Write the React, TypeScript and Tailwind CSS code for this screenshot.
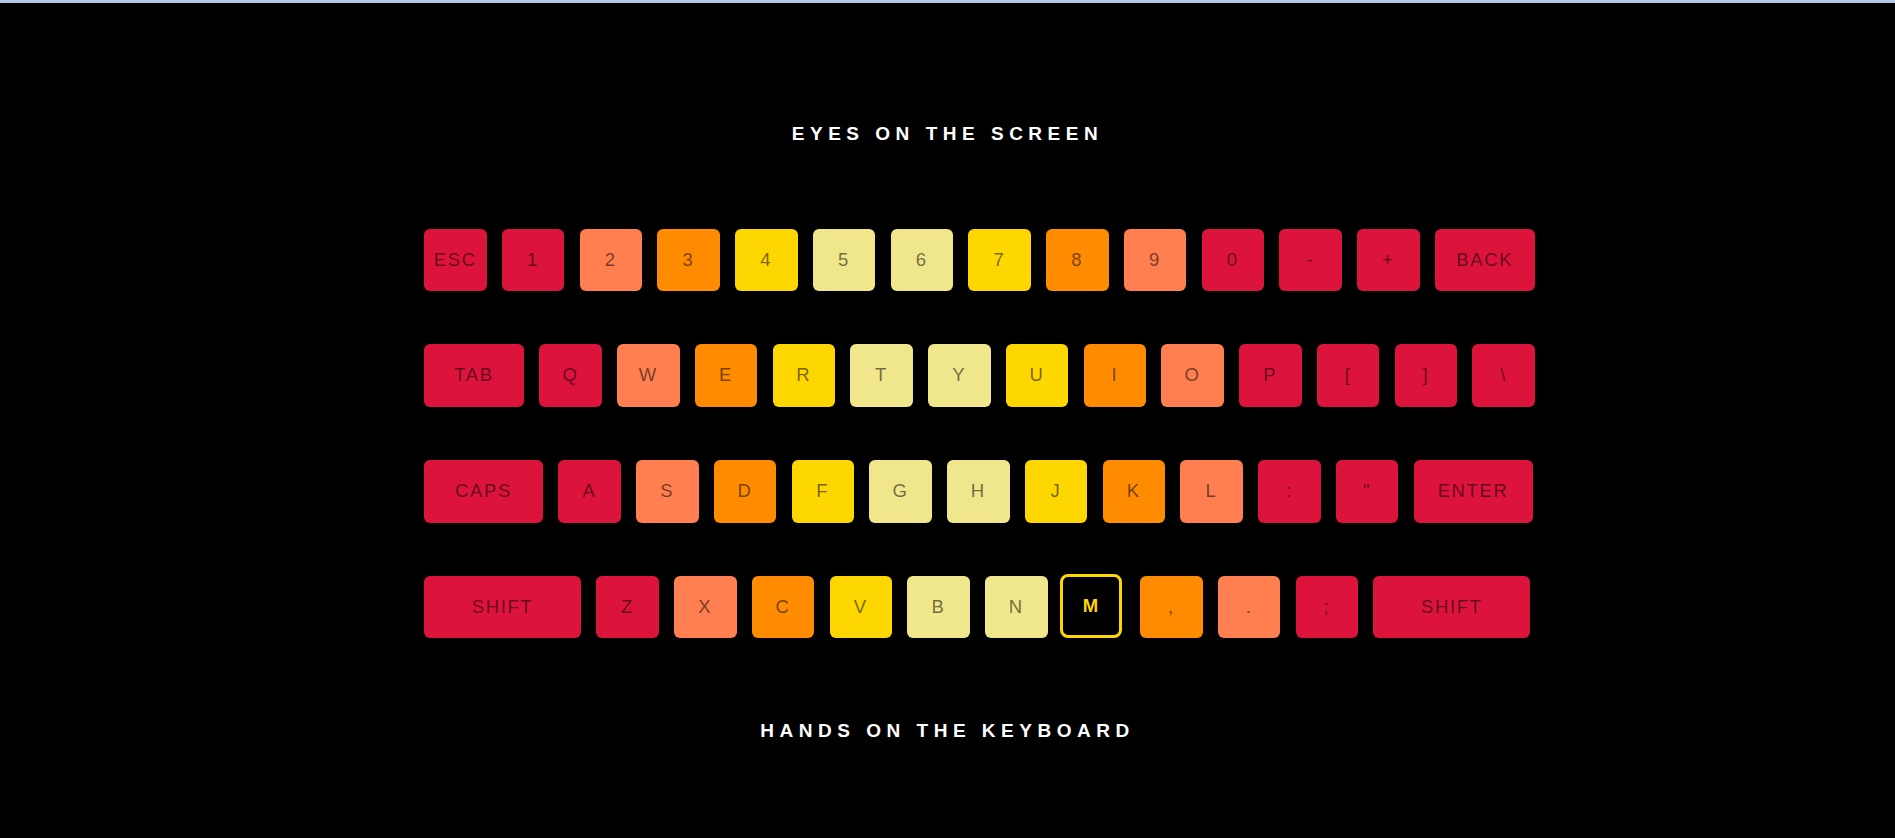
import React from 'react';
import clsx from 'clsx';

type Tone = 'crimson' | 'coral' | 'orange' | 'gold' | 'khaki' | 'active';

interface KeyDef {
  label: string;
  tone: Tone;
  width?: string;
}

const toneClass: Record<Tone, string> = {
  crimson: 'bg-[#dc143c] text-black/55',
  coral: 'bg-[#ff7f50] text-black/55',
  orange: 'bg-[#ff8c00] text-black/55',
  gold: 'bg-[#ffd700] text-black/55',
  khaki: 'bg-[#f0e68c] text-black/55',
  active:
    'bg-black border-[3px] border-[#ffd700] text-[#ffd700] font-bold rounded-[8px] ml-[-2.5px] mr-[2.5px] h-[64px] mt-[-1.5px] w-[62px]',
};

const rows: KeyDef[][] = [
  [
    { label: 'ESC', tone: 'crimson' },
    { label: '1', tone: 'crimson' },
    { label: '2', tone: 'coral' },
    { label: '3', tone: 'orange' },
    { label: '4', tone: 'gold' },
    { label: '5', tone: 'khaki' },
    { label: '6', tone: 'khaki' },
    { label: '7', tone: 'gold' },
    { label: '8', tone: 'orange' },
    { label: '9', tone: 'coral' },
    { label: '0', tone: 'crimson' },
    { label: '-', tone: 'crimson' },
    { label: '+', tone: 'crimson' },
    { label: 'BACK', tone: 'crimson', width: 'w-[100px]' },
  ],
  [
    { label: 'TAB', tone: 'crimson', width: 'w-[100px]' },
    { label: 'Q', tone: 'crimson' },
    { label: 'W', tone: 'coral' },
    { label: 'E', tone: 'orange' },
    { label: 'R', tone: 'gold' },
    { label: 'T', tone: 'khaki' },
    { label: 'Y', tone: 'khaki' },
    { label: 'U', tone: 'gold' },
    { label: 'I', tone: 'orange' },
    { label: 'O', tone: 'coral' },
    { label: 'P', tone: 'crimson' },
    { label: '[', tone: 'crimson' },
    { label: ']', tone: 'crimson' },
    { label: '\\', tone: 'crimson' },
  ],
  [
    { label: 'CAPS', tone: 'crimson', width: 'w-[119px]' },
    { label: 'A', tone: 'crimson' },
    { label: 'S', tone: 'coral' },
    { label: 'D', tone: 'orange' },
    { label: 'F', tone: 'gold' },
    { label: 'G', tone: 'khaki' },
    { label: 'H', tone: 'khaki' },
    { label: 'J', tone: 'gold' },
    { label: 'K', tone: 'orange' },
    { label: 'L', tone: 'coral' },
    { label: ':', tone: 'crimson' },
    { label: '"', tone: 'crimson' },
    { label: 'ENTER', tone: 'crimson', width: 'w-[119px]' },
  ],
  [
    { label: 'SHIFT', tone: 'crimson', width: 'w-[157px]' },
    { label: 'Z', tone: 'crimson' },
    { label: 'X', tone: 'coral' },
    { label: 'C', tone: 'orange' },
    { label: 'V', tone: 'gold' },
    { label: 'B', tone: 'khaki' },
    { label: 'N', tone: 'khaki' },
    { label: 'M', tone: 'active' },
    { label: ',', tone: 'orange' },
    { label: '.', tone: 'coral' },
    { label: ';', tone: 'crimson' },
    { label: 'SHIFT', tone: 'crimson', width: 'w-[157px]' },
  ],
];

const Key: React.FC<{ k: KeyDef }> = ({ k }) => (
  <div
    className={clsx(
      'flex h-[62.5px] shrink-0 items-center justify-center rounded-[6px] text-[18.5px] leading-none tracking-[1.6px]',
      k.width ?? 'w-[62.5px]',
      toneClass[k.tone]
    )}
  >
    {k.label}
  </div>
);

export default function App() {
  return (
    <div className="min-h-[838px] bg-black font-['Liberation_Sans',Arial,sans-serif]">
      {/* window edge */}
      <div className="h-[3px] bg-[#b4c6e2]" />

      <h1 className="pt-[120px] text-center text-[19px] font-bold leading-[22px] tracking-[0.29em] text-white">
        EYES ON THE SCREEN
      </h1>

      {/* Keyboard */}
      <div className="mt-[83.8px] ml-[424px] flex flex-col gap-y-[53.2px]">
        {rows.map((row, i) => (
          <div key={i} className="flex items-start gap-x-[15.25px]">
            {row.map((k, j) => (
              <Key key={j} k={k} />
            ))}
          </div>
        ))}
      </div>

      <h2 className="mt-[81.6px] text-center text-[19px] font-bold leading-[22px] tracking-[0.29em] text-white">
        HANDS ON THE KEYBOARD
      </h2>
    </div>
  );
}
